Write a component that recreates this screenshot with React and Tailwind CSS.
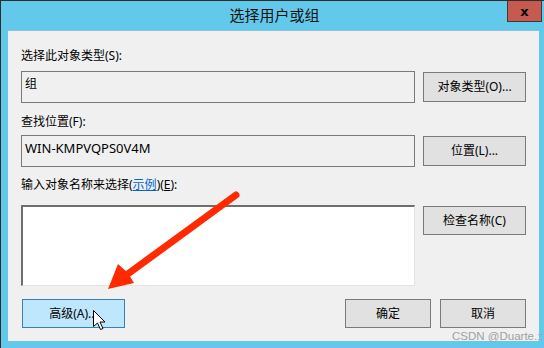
import React from "react";

const FONT = { fontFamily: '"Noto Sans", "Noto Sans CJK SC", sans-serif' };

function Btn({ children, className = "" }) {
  return (
    <div
      className={`flex items-center justify-center border border-[#7a7a7a] bg-[#e1e1e1] text-[12px] text-black ${className}`}
    >
      {children}
    </div>
  );
}

function RedArrow() {
  return (
    <svg className="absolute left-0 top-0 pointer-events-none" width="544" height="348">
      <line x1="235" y1="194" x2="124" y2="275" stroke="#ff2a00" strokeWidth="7" strokeLinecap="round" />
      <polygon points="107,288 117,263 127,272 133,282" fill="#ff2a00" />
    </svg>
  );
}

function Cursor() {
  return (
    <svg className="absolute left-[92px] top-[309px]" width="14" height="22" viewBox="-0.5 -0.5 14 22">
      <path d="M0 0 L0 16 L4 12.5 L7 19 L9.5 18 L6.5 11.5 L11.5 11.5 Z" fill="#fff" stroke="#000" strokeWidth="1" strokeLinejoin="round" />
    </svg>
  );
}

export default function App() {
  return (
    <div className="relative w-[544px] h-[348px] overflow-hidden bg-[#63c9ea] border-t border-l border-[#2e2e2e] flex flex-col" style={FONT}>
      {/* title bar */}
      <div className="relative h-[29px] flex items-center justify-center">
        <span className="text-[15px] text-[#111] pl-[4px]">选择用户或组</span>
        <div className="absolute right-[2px] top-0 w-[35px] h-[21px] bg-[#c75a50] border-x border-b border-[#3a3a3a] flex items-center justify-center">
          <span className="text-[13px] font-bold text-black leading-none" style={{ fontFamily: '"DejaVu Sans", sans-serif' }}>x</span>
        </div>
      </div>

      {/* content */}
      <div className="ml-[7px] mr-[5px] h-[311px] bg-[#f0f0f0] border-t border-[#8dc3da] px-[13px] flex flex-col text-black">
        <div className="mt-[17px] h-[16px] leading-[16px] text-[12px]">选择此对象类型(S):</div>
        <div className="mt-[7px] flex items-center gap-[8px]">
          <div className="w-[394px] h-[32px] border border-[#7a7a7a] bg-[#f0f0f0] px-[3px] pt-[4px] text-[12px] leading-[16px]">组</div>
          <Btn className="w-[103px] h-[30px]">对象类型(O)...</Btn>
        </div>

        <div className="mt-[11px] h-[16px] leading-[16px] text-[12px]">查找位置(F):</div>
        <div className="mt-[5px] flex items-center gap-[8px]">
          <div className="w-[394px] h-[32px] border border-[#7a7a7a] bg-[#f0f0f0] px-[3px] pt-[4px] text-[13px] leading-[16px]">WIN-KMPVQPS0V4M</div>
          <Btn className="w-[103px] h-[30px]">位置(L)...</Btn>
        </div>

        <div className="mt-[10px] h-[16px] leading-[16px] text-[12px]">
          输入对象名称来选择(<span className="text-[#0066cc] underline">示例</span>)(<span className="underline">E</span>):
        </div>
        <div className="mt-[12px] flex items-start gap-[8px]">
          <div className="w-[394px] h-[81px] bg-white border-t-2 border-l-2 border-[#6e6e6e] border-r border-b border-r-[#e3e3e3] border-b-[#e3e3e3]" />
          <Btn className="mt-[1px] w-[103px] h-[29px]">检查名称(C)</Btn>
        </div>

        <div className="mt-[13px] flex items-center">
          <div className="ml-[1px] w-[103px] h-[29px] flex items-center justify-center border border-[#3c7fb1] bg-[#bee6fd] text-[12px]">
            高级(A)...
          </div>
          <div className="flex-1" />
          <Btn className="w-[86px] h-[29px]">确定</Btn>
          <Btn className="ml-[9px] w-[86px] h-[29px]">取消</Btn>
        </div>
      </div>

      <RedArrow />
      <Cursor />
      <div className="absolute left-[451px] top-[328px] whitespace-nowrap text-[11.5px] leading-[14px] text-[#a0a0a0]" style={{ fontFamily: '"Liberation Sans", sans-serif' }}>
        CSDN @Duarte.;:
      </div>
    </div>
  );
}
